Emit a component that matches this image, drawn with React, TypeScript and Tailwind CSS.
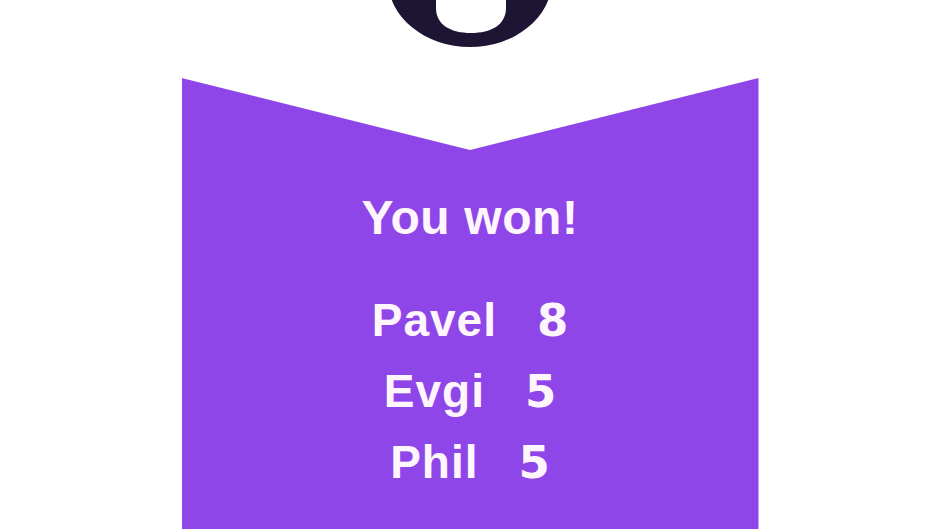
import React from "react";

const rows = [
  { name: "Pavel", score: 8 },
  { name: "Evgi", score: 5 },
  { name: "Phil", score: 5 },
];

export default function App() {
  return (
    <div
      className="w-[940px] h-[529px] overflow-hidden bg-white flex flex-col items-center"
      style={{ fontFamily: '"Liberation Sans", Arial, sans-serif' }}
    >
      <svg width="180" height="50" viewBox="0 0 180 50" className="block shrink-0">
        <path
          fillRule="evenodd"
          fill="#1e1534"
          d="M8,-20 A82,67 0 0 0 172,-20 A82,67 0 0 0 8,-20 Z M56,-5 L56,8 C56,25 71,33 91,33 C111,33 126,25 126,8 L126,-5 Z"
        />
      </svg>
      <div className="mt-[28px] w-[577px] h-[451px] shrink-0 bg-[#8e46e9] [clip-path:polygon(0_0,50%_72px,100%_0,100%_100%,0_100%)] flex flex-col items-center pt-[112px] text-[#fff6fd] font-bold">
        <div className="text-[48px] leading-[56px] tracking-[0.6px]">You won!</div>
        <div className="mt-[39px] flex flex-col items-center">
          {rows.map((r) => (
            <div key={r.name} className="flex items-baseline gap-[40px] text-[46px] leading-[71px]">
              <span className="tracking-[1px]">{r.name}</span>
              <span className="font-['DejaVu_Sans',sans-serif] text-[45px]">{r.score}</span>
            </div>
          ))}
        </div>
      </div>
    </div>
  );
}
